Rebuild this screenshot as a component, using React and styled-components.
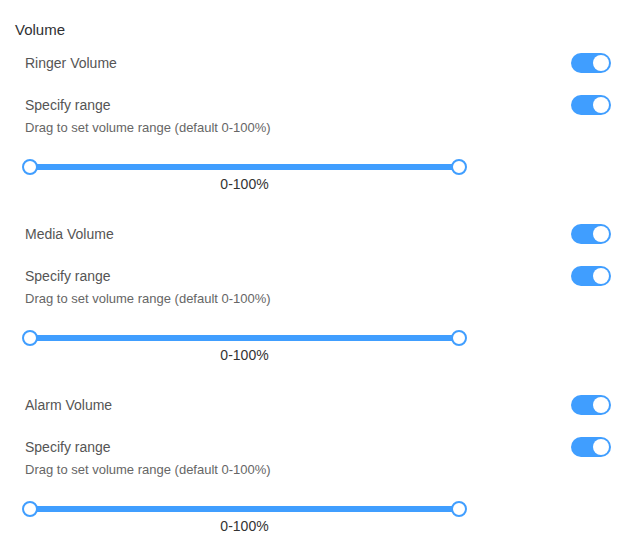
import { useState } from "react"
import styled, { createGlobalStyle } from "styled-components"

const GlobalStyle = createGlobalStyle`
  body {
    margin: 0;
    background: #fff;
    font-family: "Liberation Sans", Arial, sans-serif;
  }
`

const Page = styled.div`
  padding: 20px 22px 0 15px;
  display: flex;
  flex-direction: column;
`

const Heading = styled.div`
  font-size: 15px;
  line-height: 20px;
  color: #303133;
`

const Groups = styled.div`
  margin-top: 13px;
  padding-left: 10px;
  display: flex;
  flex-direction: column;
  gap: 32px;
`

const Group = styled.section`
  display: flex;
  flex-direction: column;
`

const Row = styled.div`
  display: flex;
  align-items: center;
  justify-content: space-between;
  height: 20px;
  margin-top: ${props => props.spaced ? "22px" : "0"};
`

const Label = styled.span`
  font-size: 14px;
  color: #555;
`

const Desc = styled.div`
  margin-top: 4px;
  font-size: 13px;
  line-height: 18px;
  color: #666;
`

const Switch = styled.button`
  width: 40px;
  height: 20px;
  border: none;
  border-radius: 10px;
  padding: 0 2px;
  display: flex;
  align-items: center;
  justify-content: ${props => props.on ? "flex-end" : "flex-start"};
  background-color: ${props => props.on ? "#409eff" : "#dcdfe6"};
  cursor: pointer;
`

const Knob = styled.span`
  width: 16px;
  height: 16px;
  border-radius: 50%;
  background-color: #fff;
`

const SliderBox = styled.div`
  margin: 22px 0 0 -3px;
  width: 445px;
  height: 16px;
  padding: 0 8px;
  box-sizing: border-box;
  position: relative;
  display: flex;
  align-items: center;
`

const Track = styled.div`
  flex: 1;
  height: 6px;
  border-radius: 3px;
  background-color: #409eff;
`

const Thumb = styled.span`
  position: absolute;
  top: 0;
  left: ${props => props.side === "left" && "0"};
  right: ${props => props.side === "right" && "0"};
  width: 16px;
  height: 16px;
  box-sizing: border-box;
  border-radius: 50%;
  border: 2px solid #409eff;
  background-color: #fff;
`

const RangeText = styled.div`
  margin: 1px 0 0 -3px;
  width: 445px;
  text-align: center;
  font-size: 14px;
  line-height: 16px;
  color: #333;
`

const Toggle = ({ initial }) => {
  const [on, setOn] = useState(initial)
  return (
    <Switch on={on} onClick={() => setOn(!on)}>
      <Knob />
    </Switch>
  )
}

const groups = ["Ringer Volume", "Media Volume", "Alarm Volume"]

const App = () => {
  return (
    <>
      <GlobalStyle />
      <Page>
        <Heading>Volume</Heading>
        <Groups>
          {groups.map(name => (
            <Group key={name}>
              <Row>
                <Label>{name}</Label>
                <Toggle initial={true} />
              </Row>
              <Row spaced>
                <Label>Specify range</Label>
                <Toggle initial={true} />
              </Row>
              <Desc>Drag to set volume range (default 0-100%)</Desc>
              <SliderBox>
                <Track />
                <Thumb side="left" />
                <Thumb side="right" />
              </SliderBox>
              <RangeText>0-100%</RangeText>
            </Group>
          ))}
        </Groups>
      </Page>
    </>
  )
}

export default App
